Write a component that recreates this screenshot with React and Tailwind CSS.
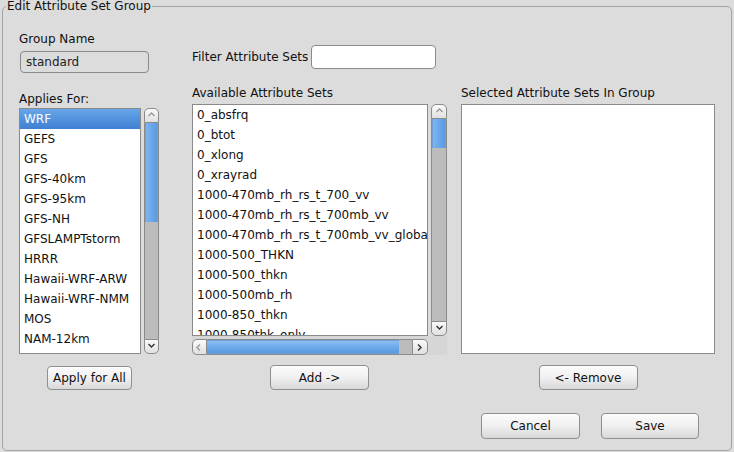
import React from "react";

const appliesFor = [
  "WRF", "GEFS", "GFS", "GFS-40km", "GFS-95km", "GFS-NH", "GFSLAMPTstorm",
  "HRRR", "Hawaii-WRF-ARW", "Hawaii-WRF-NMM", "MOS", "NAM-12km",
];

const available = [
  "0_absfrq", "0_btot", "0_xlong", "0_xrayrad",
  "1000-470mb_rh_rs_t_700_vv", "1000-470mb_rh_rs_t_700mb_vv",
  "1000-470mb_rh_rs_t_700mb_vv_global", "1000-500_THKN", "1000-500_thkn",
  "1000-500mb_rh", "1000-850_thkn", "1000-850thk_only",
];

function Btn({ children, className = "" }) {
  return (
    <button
      className={
        "flex items-center justify-center rounded-[4px] border border-[#8e8f91] bg-gradient-to-b from-[#fbfbfb] via-[#f0f0f0] to-[#d8d8d8] text-[12px] text-[#111] shadow-[inset_0_1px_0_#ffffff] " +
        className
      }
    >
      {children}
    </button>
  );
}

function Chevron({ dir }) {
  const paths = {
    up: "M1.5 5 L4.5 2 L7.5 5",
    down: "M1.5 2 L4.5 5 L7.5 2",
    left: "M5 1.5 L2 4.5 L5 7.5",
    right: "M2 1.5 L5 4.5 L2 7.5",
  };
  const color = dir === "up" || dir === "left" ? "#9a9a9a" : "#333333";
  return (
    <svg width="9" height="9" viewBox="0 0 9 9" fill="none">
      <path d={paths[dir]} stroke={color} strokeWidth="1.4" />
    </svg>
  );
}

function VScroll({ thumb, className = "" }) {
  return (
    <div className={"flex w-[15px] flex-col " + className}>
      <div className="flex h-[15px] items-center justify-center rounded-t-[5px] border border-[#8b8b8b] bg-gradient-to-b from-[#fafafa] to-[#e0e0e0]">
        <Chevron dir="up" />
      </div>
      <div className="flex flex-1 flex-col border-x border-[#8b8b8b] bg-[#bcbcbc]">
        <div
          className="border-x border-[#6a9fd8] bg-gradient-to-r from-[#7fb4ee] via-[#6aa8ec] to-[#5d9be0]"
          style={{ height: thumb }}
        />
      </div>
      <div className="flex h-[15px] items-center justify-center rounded-b-[5px] border border-[#8b8b8b] bg-gradient-to-b from-[#fafafa] to-[#e0e0e0]">
        <Chevron dir="down" />
      </div>
    </div>
  );
}

export default function App() {
  return (
    <div
      className="h-[452px] w-[734px] overflow-hidden bg-[#dcdcdc] text-[12px] text-[#111]"
      style={{ fontFamily: '"DejaVu Sans", sans-serif' }}
    >
      <fieldset className="ml-[2px] h-[451px] w-[730px] rounded-[5px] border border-[#a3a3a3]">
        <legend className="ml-[3px] px-px text-[12px] leading-[12px]">
          Edit Attribute Set Group
        </legend>

        <div className="flex pl-[16px]">
          {/* column 1 */}
          <div className="flex w-[140px] flex-col">
            <div className="mt-[20px] h-[14px] leading-[14px]">Group Name</div>
            <div className="ml-px mt-[5px] flex h-[22px] w-[129px] items-center rounded-[4px] border border-[#8a8a8a] bg-[#dcdcdc] px-[5px] text-[#222]">
              standard
            </div>
            <div className="mt-[19px] h-[14px] leading-[14px]">Applies For:</div>
            <div className="mt-[2px] flex h-[246px] gap-[3px]">
              <div className="w-[122px] overflow-hidden border border-[#8a8a8a] bg-white">
                {appliesFor.map((a, i) => (
                  <div
                    key={a}
                    className={
                      "flex h-[20px] items-center whitespace-nowrap px-[4px] " +
                      (i === 0
                        ? "bg-gradient-to-b from-[#67a6e8] to-[#3e7fd2] text-white"
                        : "")
                    }
                  >
                    {a}
                  </div>
                ))}
              </div>
              <VScroll thumb={99} />
            </div>
            <Btn className="ml-[28px] mt-[12px] h-[24px] w-[85px]">Apply for All</Btn>
          </div>

          {/* column 2 */}
          <div className="ml-[33px] flex w-[255px] flex-col">
            <div className="mt-[33px] flex h-[24px] items-center">
              <span className="w-[119px]">Filter Attribute Sets</span>
              <div className="h-[24px] w-[125px] rounded-[4px] border border-[#8a8a8a] bg-white" />
            </div>
            <div className="mt-[17px] h-[14px] leading-[14px]">Available Attribute Sets</div>
            <div className="mt-[4px] flex h-[232px] gap-[3px]">
              <div className="w-[236px] overflow-hidden border border-[#8a8a8a] bg-white">
                {available.map((a) => (
                  <div key={a} className="flex h-[20px] items-center whitespace-nowrap px-[4px]">
                    {a}
                  </div>
                ))}
              </div>
              <VScroll thumb={29} className="w-[16px]" />
            </div>
            <div className="flex h-[19px] bg-[#d6d6d6]">
              <div className="mt-[3px] flex h-[16px] w-[236px]">
                <div className="flex w-[15px] items-center justify-center rounded-l-[5px] border border-[#8b8b8b] bg-gradient-to-b from-[#fafafa] to-[#e0e0e0]">
                  <Chevron dir="left" />
                </div>
                <div className="flex flex-1 border-y border-[#8b8b8b] bg-[#bcbcbc]">
                  <div className="w-[192px] border-y border-[#6a9fd8] bg-gradient-to-b from-[#8dbff2] via-[#6ca9ec] to-[#5a98de]" />
                </div>
                <div className="flex w-[16px] items-center justify-center rounded-r-[5px] border border-[#8b8b8b] bg-gradient-to-b from-[#fafafa] to-[#e0e0e0]">
                  <Chevron dir="right" />
                </div>
              </div>
            </div>
            <Btn className="mx-auto mt-[10px] h-[25px] w-[99px]">Add -&gt;</Btn>
          </div>

          {/* column 3 */}
          <div className="ml-[14px] flex w-[254px] flex-col">
            <div className="mt-[74px] h-[14px] leading-[14px]">Selected Attribute Sets In Group</div>
            <div className="mt-[4px] h-[250px] border border-[#8a8a8a] bg-white" />
            <Btn className="mx-auto mt-[11px] h-[25px] w-[99px]">&lt;- Remove</Btn>
            <div className="ml-[20px] mt-[23px] flex gap-[21px]">
              <Btn className="h-[26px] w-[99px]">Cancel</Btn>
              <Btn className="h-[26px] w-[98px]">Save</Btn>
            </div>
          </div>
        </div>
      </fieldset>
    </div>
  );
}
